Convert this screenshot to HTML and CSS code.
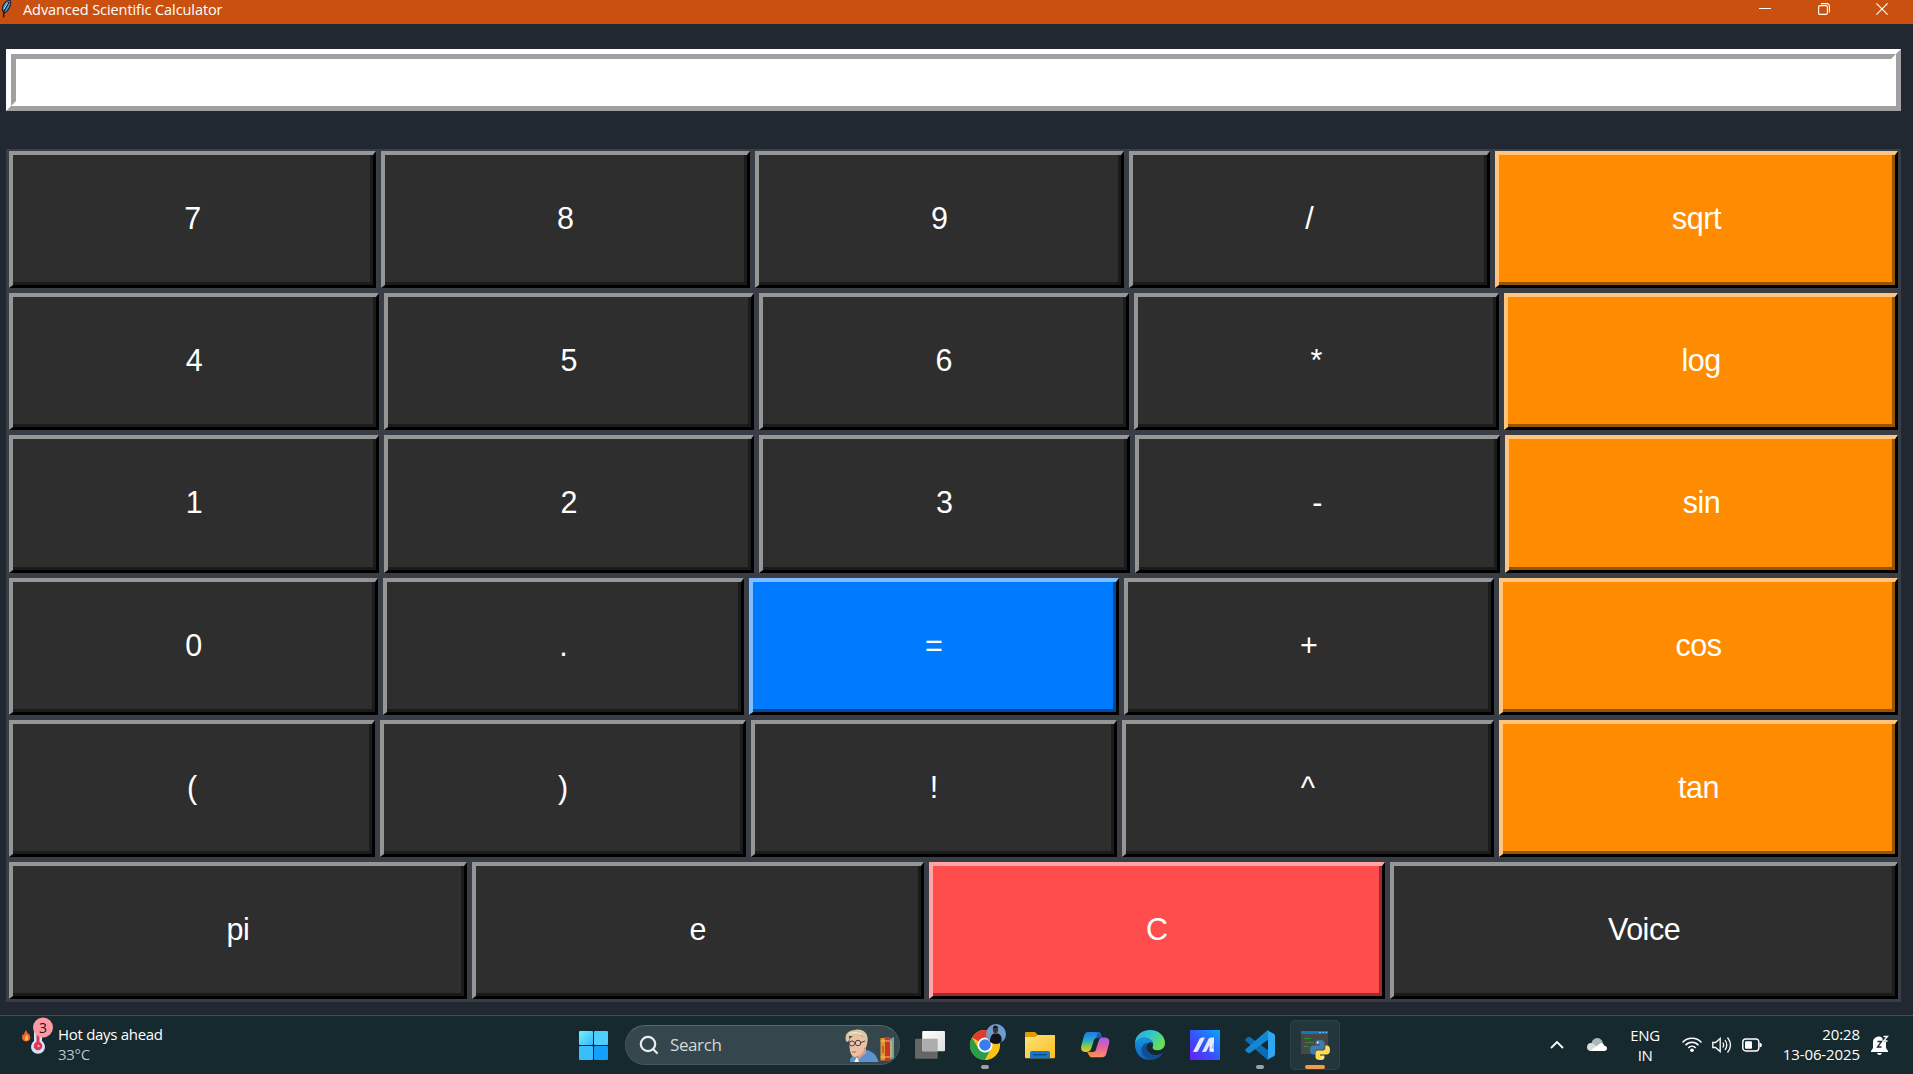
FILE: index.html
```html
<!DOCTYPE html>
<html lang="en">
<head>
<meta charset="utf-8">
<title>Advanced Scientific Calculator</title>
<link rel="stylesheet" href="styles.css">
</head>
<body>
<main class="window">
  <header class="titlebar">
    <svg class="feather" width="12" height="18" viewBox="0 0 12 18"><path d="M3 12C1 8 4 1 10 0C12 5 8 12 4 13Z" fill="#4f93d2" stroke="#1b2a3c" stroke-width="1.2"/><path d="M9 2L4 11L3.600 17.500" fill="none" stroke="#14191f" stroke-width="1.400"/><path d="M7.500 3L4 9" stroke="#b9dcf5" stroke-width="1"/></svg>
    <h1 class="title">Advanced Scientific Calculator</h1>
    <div class="controls">
      <svg width="12" height="16" viewBox="0 0 12 16"><path d="M0 8.500H12" stroke="#fff"/></svg>
      <svg width="12" height="16" viewBox="0 0 12 16" fill="none" stroke="#fff" stroke-width="1.100"><rect x=".6" y="5.600" width="8.800" height="8.800" rx="1.300"/><path d="M3 3.600H9A2.400 2.400 0 0 1 11.400 6V12.500"/></svg>
      <svg width="12" height="16" viewBox="0 0 12 16"><path d="M.4 3.400L11.600 14.600M11.600 3.400L.4 14.600" stroke="#fff" stroke-width="1.200"/></svg>
    </div>
  </header>
  <div class="entry"><div class="entry-field"></div></div>
  <section class="keypad">
    <div class="row row-1"><button class="key">7</button><button class="key">8</button><button class="key">9</button><button class="key">/</button><button class="key fn">sqrt</button></div>
    <div class="row row-2"><button class="key">4</button><button class="key">5</button><button class="key">6</button><button class="key">*</button><button class="key fn">log</button></div>
    <div class="row row-3"><button class="key">1</button><button class="key">2</button><button class="key">3</button><button class="key">-</button><button class="key fn">sin</button></div>
    <div class="row row-4"><button class="key">0</button><button class="key">.</button><button class="key equals">=</button><button class="key">+</button><button class="key fn">cos</button></div>
    <div class="row row-5"><button class="key">(</button><button class="key">)</button><button class="key">!</button><button class="key">^</button><button class="key fn">tan</button></div>
    <div class="row row-6"><button class="key">pi</button><button class="key">e</button><button class="key clear">C</button><button class="key">Voice</button></div>
  </section>
</main>
<footer class="taskbar">
  <div class="weather">
    <svg class="forecast" width="36" height="50" viewBox="0 -6 36 50">
      <path d="M5 8C6 10 6 11 8 12C10 14 10 19 5.500 19.500C1 19.500 0 15 2 12L3 13C3 11 4 10 5 8Z" fill="#f4672b"/><path d="M5.500 13C8 15 7.500 18.500 5.500 18.500S3 16.500 5.500 13Z" fill="#ffc04a"/>
      <path d="M13 8H21V19A7 7 0 1 1 13 19Z" fill="#cfe4fb"/><circle cx="17" cy="24" r="4.300" fill="#df3453"/><path d="M17 10V24" stroke="#df3453" stroke-width="3"/><circle cx="17.500" cy="24" r="1.300" fill="#ff9fae"/>
      <circle cx="22" cy="5.500" r="10" fill="#ff99a4"/>
      <text x="22" y="10.600" text-anchor="middle" class="badge">3</text>
    </svg>
    <div class="weather-text"><div class="headline">Hot days ahead</div><div class="degrees">33°C</div></div>
  </div>
  <nav class="apps">
    <svg class="start" width="29" height="29" viewBox="0 0 29 29"><defs><linearGradient id="win" x1="0" y1="0" x2="1" y2="1" gradientUnits="objectBoundingBox"><stop stop-color="#75f0ff"/><stop offset="1" stop-color="#35b5fb"/></linearGradient></defs><rect width="14" height="14" rx="1" fill="url(#win)"/><rect x="15" width="14" height="14" rx="1" fill="#50cefb"/><rect y="15" width="14" height="14" rx="1" fill="#38bffb"/><rect x="15" y="15" width="14" height="14" rx="1" fill="#149ffa"/></svg>
    <div class="search">
      <svg width="20" height="20" viewBox="0 0 20 20" fill="none" stroke="#e8ecec" stroke-width="2.200"><circle cx="9" cy="9" r="7.200"/><path d="M14 14L18 18" stroke-linecap="round"/></svg>
      <span class="search-label">Search</span>
      <svg class="highlight" width="50" height="33" viewBox="0 0 50 33">
        <path d="M5 33C5 29 6 28 9 27L16 23L22 21C29 23 32 27 33.500 33Z" fill="#5b92cf"/>
        <path d="M13 23L21 19V24L13 31Z" fill="#d99f82"/><path d="M12 28L14 33H9Z" fill="#f5f5f5"/>
        <path d="M4.500 10C4 18 5 27 9 28C14 28 21 23 21 11Q18 5 9 6Z" fill="#eebfa3"/>
        <path d="M1 12C-1 5 4 1 10 1C18 -1 24 5 22.500 12C22 17 21 19 20 20C20 13 19 9 17 6C13 9 7 7 4 7C5 10 4 13 2 13Z" fill="#d9c6a5"/>
        <path d="M4 5C9 3 14 3 18 6" stroke="#f4e8cb" stroke-width="1.300" fill="none"/>
        <g fill="#f2d3c0" fill-opacity=".6" stroke="#493f3e"><circle cx="7" cy="14.500" r="2.500"/><circle cx="13" cy="14" r="2.700"/><path d="M16 13.500L20 12"/></g><path d="M7 23H11" stroke="#aa6453"/>
        <rect x="35.500" y="9" width="4.500" height="22.500" fill="#e9932f"/><rect x="40" y="8" width="5" height="24" fill="#c9352b"/><path d="M45 10L49 8V29L45 31Z" fill="#7fa18b"/><path d="M35.500 12H40M35.500 28H40M40 12H45M40 28H45M46 12V28" stroke="#f2c662"/><path d="M38 17V24" stroke="#81401c"/>
      </svg>
    </div>
    <div class="app"><svg viewBox="0 0 50 50"><defs><linearGradient id="sheet" x1="0" y1="0" x2="1" y2="1"><stop stop-color="#fff"/><stop offset="1" stop-color="#dedede"/></linearGradient></defs><rect x="10" y="18.700" width="22.700" height="20" rx="1" fill="#666"/><rect x="17.200" y="11" width="22.800" height="20.200" rx="1" fill="url(#sheet)"/><path d="M17.200 18.700H32.700V31.200H17.200Z" fill="#adadad"/></svg></div>
    <div class="app"><svg viewBox="0 0 50 50">
      <circle cx="25" cy="25" r="15" fill="#fbc116"/><path d="M25 25L12 17.500A15 15 0 0 1 38 17.500Z" fill="#e33b2e"/><path d="M12 17.500A15 15 0 0 0 25 40L31.500 28.750L25 25L18.500 28.750Z" fill="#2a9d4b"/><path d="M25 18H38A15 15 0 0 1 25 40L31.100 28.500Z" fill="#fbc116"/>
      <circle cx="25" cy="25" r="7.500" fill="#fff"/><circle cx="25" cy="25" r="5.800" fill="#3b7ded"/>
      <circle cx="36" cy="14" r="10" fill="#6e9ccf"/><path d="M30 22C30 17 31 15 34 13.500H38C41 15 42 17 41.500 22Q36 26 30 22Z" fill="#10141c"/><ellipse cx="35.500" cy="9.500" rx="2.600" ry="3.700" fill="#442f29"/><path d="M32.700 8Q35 3 38.500 8L36 7.500Z" fill="#111"/>
      <rect x="21" y="45" width="8" height="4" rx="2" fill="#9aa2a4"/></svg></div>
    <div class="app"><svg viewBox="0 0 50 50"><defs><linearGradient id="fold" x1="0" y1="0" x2="1" y2="1"><stop stop-color="#ffe27a"/><stop offset="1" stop-color="#fabd20"/></linearGradient></defs><path d="M10 13Q10 12 11 12H20L23 15H39Q40 15 40 16V24H10Z" fill="#dc9d09"/><path d="M10 17H20L23 15H39Q40 15 40 16V37Q40 38.300 39 38.300H11Q10 38.300 10 37Z" fill="url(#fold)"/><path d="M15 38.300V33Q15 31 17 31H33Q35 31 35 33V38.300Z" fill="#1378cb"/><path d="M18 34.700H32" stroke="#0a4c8e" stroke-width="1.400"/></svg></div>
    <div class="app"><svg viewBox="0 0 50 50"><defs>
      <linearGradient id="cop1" x1="0" y1="0" x2="0" y2="1"><stop stop-color="#2377e6"/><stop offset=".4" stop-color="#23a9cf"/><stop offset=".72" stop-color="#86cc48"/><stop offset="1" stop-color="#f6c526"/></linearGradient>
      <linearGradient id="cop2" x1="0" y1="0" x2="0" y2="1"><stop stop-color="#9b62ec"/><stop offset=".5" stop-color="#ea5fa1"/><stop offset="1" stop-color="#fb945d"/></linearGradient></defs>
      <path d="M18 12H28C31 12 31 15 32 18H27C24 18 24 20 23 23L21 29C20 31 19 32 16 32C11 32 10.500 29 11.500 25L14 16Q15 12 18 12Z" fill="url(#cop1)"/>
      <path d="M26 12C31 12 30 18 34 18H26L28 13Z" fill="#1c50bb"/>
      <path d="M32 37.300H22C19 37.300 19 34 18 32H23C26 32 26 29 27 26L29 20C30 18 31 17.500 34 17.500C39 17.500 40 20 39 24L36.500 33Q35.500 37.300 32 37.300Z" fill="url(#cop2)"/><path d="M17 32H23L22 37.300C19 37 19 34 17 32Z" fill="#f38b31"/></svg></div>
    <div class="app"><svg viewBox="0 0 50 50"><defs><linearGradient id="edge1" x1="0" y1="0" x2="1" y2=".5"><stop stop-color="#24a9ea"/><stop offset=".55" stop-color="#35c6c8"/><stop offset="1" stop-color="#67e04f"/></linearGradient><linearGradient id="edge2" x1="0" y1="0" x2="0" y2="1"><stop stop-color="#1794e2"/><stop offset="1" stop-color="#0a65bd"/></linearGradient></defs>
      <path d="M10 24C10 15 17 10 25 10C34 10 40 16 40 23C40 28 36 31 31 30C28 30 27 28 28 26C29 22 26 19 21 18C16 17 12 20 10 24Z" fill="url(#edge1)"/>
      <path d="M10 24C12 19 17 17 21 18C26 19 28 21 28 24C27 21 22 22 21 27C20 33 25 38 30 38C27 40 24 40 21 39.500C14 38 10 32 10 24Z" fill="url(#edge2)"/>
      <path d="M22.500 22.500C19 29 24 35 31 35C35 35 37 33 38.500 32C36 37 31 40 26 40C20 39 16 34 16.500 29C17 26 19 23.500 22.500 22.500Z" fill="#114f92"/></svg></div>
    <div class="app"><svg viewBox="0 0 50 50"><defs><linearGradient id="asus" x1="0" y1="1" x2="1" y2="0"><stop stop-color="#6a1df5"/><stop offset=".5" stop-color="#3457fa"/><stop offset="1" stop-color="#0aa5ff"/></linearGradient></defs><rect x="10" y="10" width="30" height="30" fill="url(#asus)"/><path d="M13 32L19.500 19Q20.500 17.500 22 17.500H25L18 31Q17.500 32 16 32ZM22 32L28.500 19Q29.300 17.500 31 17.500H34V32H29.500V25L26.500 31Q26 32 24.500 32Z" fill="#e7eaff"/><path d="M29.500 32L34 22V32Z" fill="#b9b9fa"/><circle cx="32" cy="30" r="1.600" fill="#fff"/></svg></div>
    <div class="app"><svg viewBox="0 0 50 50"><path d="M10.500 19L13 17Q14 16.500 15 17L34 31V39.500Q33 40 31.500 39L10.500 20.800Q10 20 10.500 19Z" fill="#0a6db5"/><path d="M10.500 31L13 33Q14 33.500 15 33L34 19V10.500Q33 10 31.500 11L10.500 29.200Q10 30 10.500 31Z" fill="#1686d0"/><path d="M32 10.400L38.500 13.500Q40 14.300 40 16V34Q40 35.700 38.500 36.500L32 39.700Q33 39 33 37V13Q33 11 32 10.400Z" fill="#2fa6f2"/><rect x="21" y="45" width="8" height="4" rx="2" fill="#9aa2a4"/></svg></div>
    <div class="app active"><svg viewBox="0 0 50 50"><rect x="11" y="11" width="27" height="23" fill="#474747"/><rect x="11" y="11" width="27" height="3" fill="#1377bf"/><path d="M29 12.500H31M32.500 12.500H34M35.500 12.500H37" stroke="#74bde9"/><path d="M14 18.500H21M15 22.500H24M14 26.500H19" stroke="#33883a" stroke-width="1.200"/>
      <path d="M29.800 20C25 20 25.500 22 25.500 24.500H30V25.500H23.500C21 25.500 20 27.500 20 30S21 34.500 23 34.500H25V32C25 30 26.500 29.500 28 29.500H32.500C34 29.500 34.500 28.500 34.500 27V23C34.500 21 33 20 29.800 20Z" fill="#3d7cab"/>
      <path d="M30.200 40C35 40 34.500 38 34.500 35.500H30V34.500H36.500C39 34.500 40 32.500 40 30S39 25.500 37 25.500H35.300V28C35.300 30 33.800 30.500 32 30.500H27.500C26 30.500 25.500 31.500 25.500 33V37C25.500 39 27 40 30.200 40Z" fill="#ffdc54"/><circle cx="27.700" cy="22.500" r=".9" fill="#fff"/><circle cx="32.300" cy="37.500" r=".9" fill="#fff"/>
      <rect x="15" y="45" width="20" height="4" rx="2" fill="#f7994b"/></svg></div>
  </nav>
  <div class="tray">
    <svg class="chevron" width="14" height="20" viewBox="0 0 14 20"><path d="M1 13L7 7L13 13" fill="none" stroke="#fff" stroke-width="1.800"/></svg>
    <svg class="cloud" width="20" height="20" viewBox="0 0 20 20"><path d="M4.500 8C6 2 14 1 16 8L17 12H3Z" fill="#aeb5b6"/><path d="M0 12C0 8 4 7 7 9L14 16H4Q0 16 0 12Z" fill="#d8dbdb"/><path d="M3 16L13 8.500C15 7.500 17 9 17 10.500C21 11 21 16 17 16Z" fill="#fff"/></svg>
    <div class="language"><div>ENG</div><div>IN</div></div>
    <svg class="wifi" width="20" height="20" viewBox="0 0 20 20" fill="none" stroke="#fff" stroke-width="1.400"><path d="M.5 7.500C5.500 1.800 14.500 1.800 19.500 7.500M3.500 10.300C7 6.200 13 6.200 16.500 10.300M6.300 13C8.300 10.500 11.700 10.500 13.700 13"/><circle cx="10" cy="15.300" r="1.800" fill="#fff" stroke="none"/></svg>
    <svg class="speaker" width="20" height="20" viewBox="0 0 20 20" fill="none" stroke="#fff" stroke-width="1.300"><path d="M.8 7.500H3.500L8.200 3.500V16.500L3.500 12.500H.8ZM10.800 7.500Q12.500 10 10.800 12.500M13 5Q16.500 10 13 15M15.500 2.500Q21.500 10 15.500 17.500"/></svg>
    <svg class="battery" width="20" height="20" viewBox="0 0 20 20"><rect x=".8" y="4" width="16" height="12" rx="3" fill="none" stroke="#fff" stroke-width="1.400"/><rect x="3" y="6.300" width="7" height="7.500" rx="1" fill="#fff"/><path d="M17.500 7.500Q20 8 20 10T17.500 12.500Z" fill="#fff"/></svg>
    <div class="clock"><div>20:28</div><div>13-06-2025</div></div>
    <svg class="bell" width="18" height="20" viewBox="0 0 18 20"><path d="M2 13V7C2 3.500 5 1.500 9 1.500L15 5V13L17 16V17H0V16ZM6 18H11Q10.500 20 8.500 20T6 18Z" fill="#fff"/><path d="M6.500 6.500H10.500L6.500 12H10.500" fill="none" stroke="#15292e" stroke-width="1.300"/><path d="M11 .8H17V7H12Z" fill="#15292e"/><path d="M12.500 1.500H16.500L12.500 6H16.500" fill="none" stroke="#fff" stroke-width="1.300"/></svg>
  </div>
</footer>
</body>
</html>
```
FILE: styles.css
```css
* { box-sizing: border-box; }

body {
  margin: 0;
  width: 1913px;
  height: 1074px;
  display: flex;
  flex-direction: column;
  overflow: hidden;
  background: #222831;
  color: #fff;
  font-family: "Open Sans", "Noto Sans", sans-serif;
}

svg { display: block; flex: none; }

/* Calculator window */
.window {
  height: 1015px;
  display: flex;
  flex-direction: column;
}

.titlebar {
  height: 24px;
  display: flex;
  align-items: flex-start;
  background: #ca5010;
}

.title {
  margin: 0 0 0 11px;
  flex: 1;
  font-size: 14.5px;
  font-weight: 400;
  line-height: 20px;
  letter-spacing: -0.08px;
}

.controls {
  display: flex;
  gap: 46.500px;
  padding-right: 25px;
}

.entry {
  margin: 25px 12px 0 6px;
  height: 62px;
  border: 5px solid;
  border-color: #fff #a0a0a0 #a0a0a0 #fff;
}

.entry-field {
  height: 100%;
  background: #fff;
  border: 5px solid;
  border-color: #a0a0a0 #fff #fff #a0a0a0;
}

.keypad {
  margin: 38px 12px 0 6px;
  height: 853px;
  padding: 2px 2.500px 3px 3px;
  display: grid;
  grid-template-rows: repeat(6, 1fr);
  gap: 5px;
  background: #393e46;
}

.row { display: grid; gap: 5px; }
.row-1 { grid-template-columns: 367fr 369fr 369fr 361fr 404fr; }
.row-2 { grid-template-columns: 370fr 370fr 370fr 365fr 395fr; }
.row-3 { grid-template-columns: 370fr 370fr 371fr 365fr 394fr; }
.row-4 { grid-template-columns: 369fr 361fr 370fr 370fr 400fr; }
.row-5 { grid-template-columns: 366fr 366fr 366fr 372fr 400fr; }
.row-6 { grid-template-columns: 458fr 452fr 456fr 509fr; }

.key {
  min-width: 0;
  padding: 0 1px 4px 0;
  background: #2e2e2e;
  border: solid;
  border-width: 4px 3px 3px 4px;
  border-color: #969696 #000 #000 #969696;
  box-shadow: inset -3px -3px #1b1b1b;
  color: #fff;
  font: 30.5px/34px "Liberation Sans", Arial, sans-serif;
  letter-spacing: -0.5px;
}

.fn {
  background: #ff8c00;
  border-color: #ffc57f #000 #000 #ffc57f;
  box-shadow: inset -3px -3px #995400;
}

.equals {
  background: #007bff;
  border-color: #80bdff #000 #000 #80bdff;
  box-shadow: inset -3px -3px #004a99;
}

.clear {
  background: #ff4c4c;
  border-color: #ffa5a5 #000 #000 #ffa5a5;
  box-shadow: inset -3px -3px #992e2e;
}

/* Taskbar */
.taskbar {
  height: 59px;
  display: flex;
  border-top: 1px solid #454b52;
  background: #15292e;
  font-size: 15px;
  line-height: 20px;
}

.weather {
  width: 579px;
  display: flex;
  padding: 6px 0 0 21px;
}

.forecast { margin-top: -6px; }

.badge {
  font-size: 14px;
  fill: #1c1416;
}

.weather-text {
  padding-top: 2px;
  margin-left: 1px;
  letter-spacing: -0.3px;
}

.degrees { color: #bcc5c6; }

.apps {
  display: flex;
  align-items: center;
  gap: 5px;
}

.search {
  width: 275px;
  height: 40px;
  margin: 0 0 0 12px;
  padding: 0 4px 0 13px;
  display: flex;
  align-items: center;
  border: 1px solid #45575b;
  border-top-color: #586a6d;
  border-radius: 20px;
  background: #35474c;
}

.search-label {
  flex: 1;
  margin-left: 11px;
  color: #d3d9da;
  font-size: 17px;
  letter-spacing: -0.4px;
}

.app {
  width: 50px;
  height: 50px;
  border-radius: 5px;
}

.active {
  background: #23363b;
  box-shadow: inset 0 0 0 1px #2f4145;
}

.tray {
  flex: 1;
  display: flex;
  align-items: center;
  padding-left: 210px;
}

.cloud { margin-left: 23px; }

.language {
  width: 40px;
  margin-left: 18px;
  text-align: center;
  letter-spacing: -0.4px;
}

.wifi { margin-left: 17px; }
.speaker, .battery { margin-left: 10px; }

.clock {
  width: 98px;
  padding-bottom: 2px;
  text-align: right;
  letter-spacing: -0.1px;
}

.bell { margin-left: 11px; }
```
